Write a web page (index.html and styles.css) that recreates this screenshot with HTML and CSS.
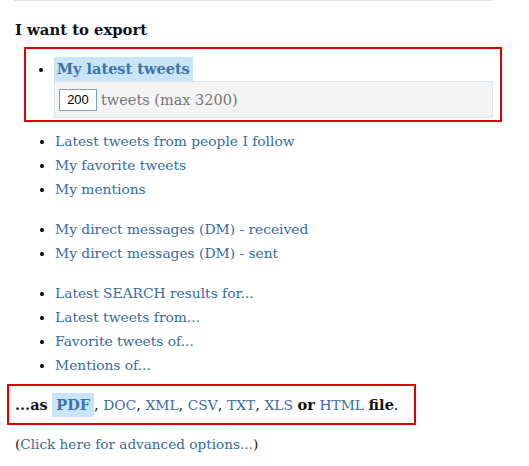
FILE: index.html
```html
<!DOCTYPE html>
<html>
<head>
<meta charset="utf-8">
<link rel="stylesheet" href="styles.css">
</head>
<body>
<div class="page">
  <div class="rule"></div>
  <h2 class="title">I want to export</h2>
  <div class="mark mark-first">
    <ul class="list">
      <li class="item"><span class="chip">My latest tweets</span>
        <div class="count-box"><span class="count-input">200</span><span class="count-label">tweets (max 3200)</span></div>
      </li>
    </ul>
  </div>
  <ul class="list group">
    <li class="item"><a class="link">Latest tweets from people I follow</a></li>
    <li class="item"><a class="link">My favorite tweets</a></li>
    <li class="item"><a class="link">My mentions</a></li>
  </ul>
  <ul class="list group">
    <li class="item"><a class="link">My direct messages (DM) - received</a></li>
    <li class="item"><a class="link">My direct messages (DM) - sent</a></li>
  </ul>
  <ul class="list group">
    <li class="item"><a class="link">Latest SEARCH results for...</a></li>
    <li class="item"><a class="link">Latest tweets from...</a></li>
    <li class="item"><a class="link">Favorite tweets of...</a></li>
    <li class="item"><a class="link">Mentions of...</a></li>
  </ul>
  <div class="mark mark-format">
    <b>...as</b> <span class="chip chip-format">PDF</span>, <a class="link">DOC</a>, <a class="link">XML</a>, <a class="link">CSV</a>, <a class="link">TXT</a>, <a class="link">XLS</a> <b>or</b> <a class="link">HTML</a> <b>file</b>.
  </div>
  <p class="advanced">(<a class="link">Click here for advanced options...</a>)</p>
</div>
</body>
</html>
```
FILE: styles.css
```css
html, body {
  margin: 0;
  padding: 0;
  background: #fff;
}
body {
  font-family: "DejaVu Serif", Georgia, serif;
  font-size: 14.5px;
  line-height: 24px;
  color: #111;
}
.page {
  padding-left: 15px;
  width: 478px;
}
.rule {
  height: 1px;
  background: #e6e6e6;
  margin-left: -1px;
}
.title {
  font-size: 14.8px;
  font-weight: bold;
  margin: 17px 0 0;
  line-height: 24px;
  color: #111;
}
.mark {
  border: 2px solid #e00000;
  box-sizing: border-box;
}
.mark-first {
  margin: 5px 0 0 9px;
  width: 478px;
  padding: 8px 7px 2px 0;
}
.mark-first .list {
  padding-left: 28px;
}
.list {
  margin: 0;
  padding-left: 40px;
  list-style: disc;
}
.item::marker {
  color: #000;
}
.group {
  margin-top: 16px;
}
.mark + .group {
  margin-top: 7px;
}
.item {
  line-height: 24px;
  height: 24px;
}
.mark-first .item {
  height: auto;
}
.group .link {
  font-size: 13.8px;
  line-height: 1;
}
.link {
  color: #3a6a9c;
  text-decoration: none;
}
.chip {
  display: inline-block;
  background: #c9e4f6;
  color: #3b73ab;
  font-weight: bold;
  padding: 0 3px;
  line-height: 24px;
}
.count-box {
  display: flex;
  align-items: center;
  gap: 4px;
  height: 37px;
  box-sizing: border-box;
  background: #f4f4f4;
  border: 1px solid #dbe6ef;
  padding-left: 4px;
}
.count-input {
  display: inline-block;
  box-sizing: border-box;
  width: 38px;
  height: 22px;
  border: 1px solid #7f9db9;
  background: #fff;
  font-family: "Liberation Sans", Arial, sans-serif;
  font-size: 13px;
  line-height: 20px;
  text-align: center;
  color: #000;
}
.count-label {
  color: #777;
}
.mark-format {
  margin: 7px 0 0 -8px;
  width: 409px;
  height: 41px;
  padding: 7px 0 6px 6px;
  line-height: 24px;
}
.mark-format .link {
  font-size: 13.8px;
  line-height: 1;
}
.chip-format {
  padding: 0 4px;
}
.advanced {
  margin: 7px 0 0;
  line-height: 24px;
  font-size: 13.6px;
}
```
